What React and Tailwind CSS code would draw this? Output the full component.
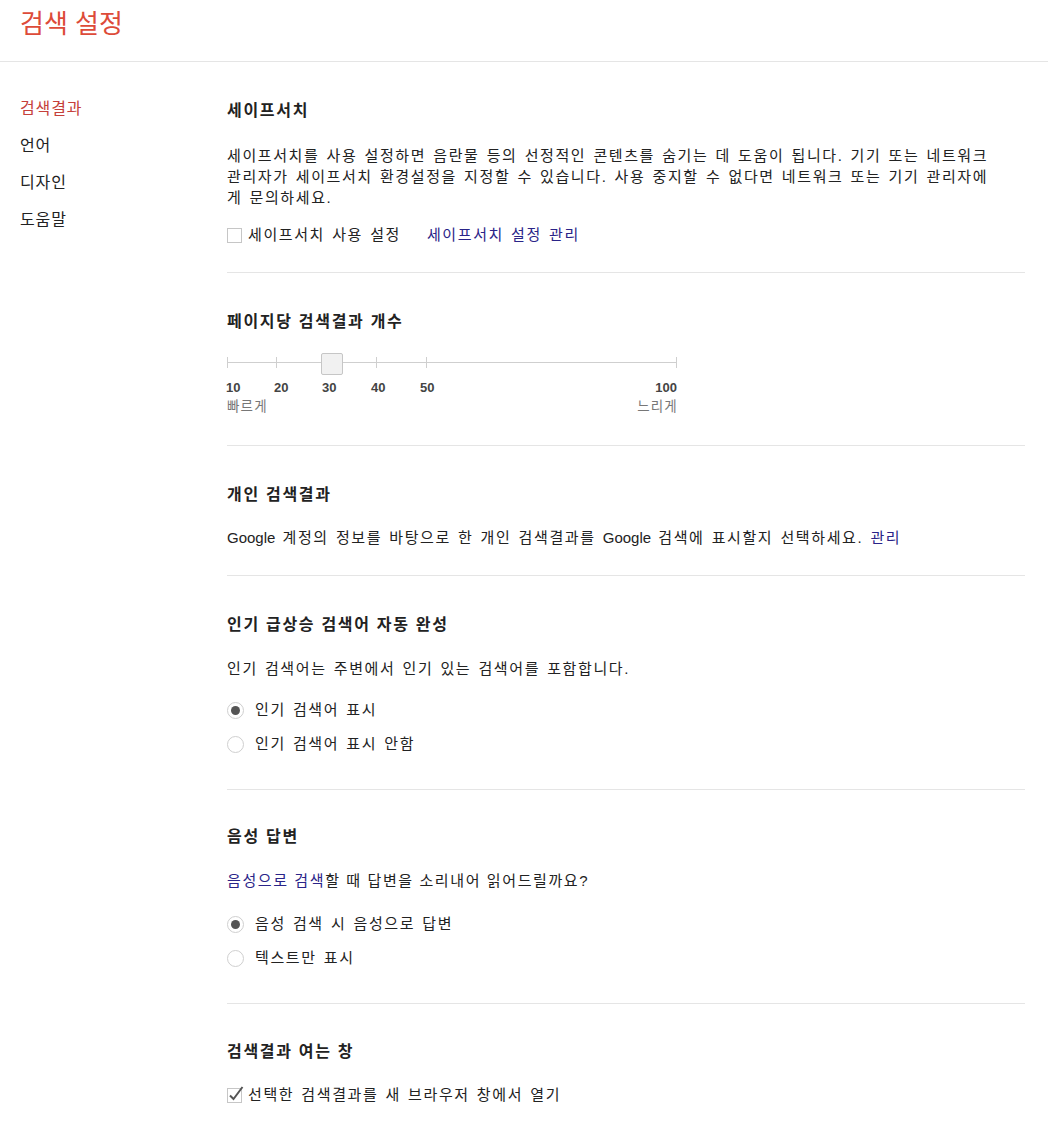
import React from "react";

function Radio({ checked, children }) {
  return (
    <div className="flex items-center h-[22px]">
      <span className="w-[17px] h-[17px] rounded-full border border-[#cfcfcf] bg-white flex items-center justify-center shrink-0">
        {checked && <span className="w-[9px] h-[9px] rounded-full bg-[#555]" />}
      </span>
      <span className="ml-[11px]">{children}</span>
    </div>
  );
}

function Title({ children }) {
  return (
    <h3 className="text-[16px] leading-[24px] font-bold tracking-[1.7px] [word-spacing:0px] text-[#222]">
      {children}
    </h3>
  );
}

function Latin({ children }) {
  return <span className="tracking-normal">{children}</span>;
}

export default function App() {
  const ticks = [0, 49, 99, 149, 199, 449];
  const labels = [
    { t: "10", l: -1 },
    { t: "20", l: 47 },
    { t: "30", l: 95 },
    { t: "40", l: 144 },
    { t: "50", l: 193 },
  ];
  return (
    <div className="min-h-screen bg-white text-[#222] font-['Liberation_Sans','Noto_Sans_CJK_KR',sans-serif] text-[15px]">
      <div className="h-[62px] border-b border-[#e5e5e5]">
        <div className="pl-[20px] pt-[8px] text-[26px] leading-[32px] text-[#dd4b39]">
          검색 설정
        </div>
      </div>
      <div className="flex">
        <nav className="w-[227px] shrink-0 pl-[20px] pt-[28px] text-[16px] tracking-[0.9px] leading-[37px]">
          <div className="text-[#c5403a]">검색결과</div>
          <div>언어</div>
          <div>디자인</div>
          <div>도움말</div>
        </nav>
        <main className="flex-1 pr-[23px] tracking-[1.6px] [word-spacing:1.4px]">
          {/* SafeSearch */}
          <section className="pt-[37px] pb-[26px] border-b border-[#e5e5e5]">
            <Title>세이프서치</Title>
            <p className="mt-[22px] leading-[21px] whitespace-nowrap">
              세이프서치를 사용 설정하면 음란물 등의 선정적인 콘텐츠를 숨기는 데 도움이 됩니다. 기기 또는 네트워크
              <br />
              관리자가 세이프서치 환경설정을 지정할 수 있습니다. 사용 중지할 수 없다면 네트워크 또는 기기 관리자에
              <br />
              게 문의하세요.
            </p>
            <div className="mt-[16px] flex items-center h-[22px]">
              <span className="w-[15px] h-[15px] border border-[#c6c6c6] bg-white shrink-0" />
              <span className="ml-[6px]">세이프서치 사용 설정</span>
              <a className="ml-[26px] text-[#2a2488]">세이프서치 설정 관리</a>
            </div>
          </section>

          {/* Results per page */}
          <section className="pt-[37px] pb-[29px] border-b border-[#e5e5e5]">
            <Title>페이지당 검색결과 개수</Title>
            <div className="relative mt-[16px] h-[28px] w-[450px]">
              <div className="absolute left-0 right-0 top-[12px] h-px bg-[#cfcfcf]" />
              {ticks.map((x) => (
                <div
                  key={x}
                  className="absolute top-[7px] h-[11px] w-px bg-[#cfcfcf]"
                  style={{ left: x }}
                />
              ))}
              <div className="absolute left-[94px] top-[3px] w-[22px] h-[22px] bg-[#f1f1f1] border border-[#c6c6c6] rounded-[2px]" />
            </div>
            <div className="relative mt-[2px] h-[16px] w-[450px] text-[13px] leading-[16px] font-bold text-[#444] tracking-normal [word-spacing:0px]">
              {labels.map((o) => (
                <span key={o.t} className="absolute top-0" style={{ left: o.l }}>
                  {o.t}
                </span>
              ))}
              <span className="absolute top-0 right-0">100</span>
            </div>
            <div className="mt-[2px] flex justify-between w-[450px] text-[13.5px] leading-[18px] text-[#777] tracking-[1.2px]">
              <span>빠르게</span>
              <span className="-mr-[1px]">느리게</span>
            </div>
          </section>

          {/* Private results */}
          <section className="pt-[37px] pb-[27px] border-b border-[#e5e5e5]">
            <Title>개인 검색결과</Title>
            <p className="mt-[20px] leading-[21px]">
              <Latin>Google</Latin> 계정의 정보를 바탕으로 한 개인 검색결과를 <Latin>Google</Latin> 검색에 표시할지 선택하세요.{" "}
              <a className="text-[#2a2488]">관리</a>
            </p>
          </section>

          {/* Trending */}
          <section className="pt-[37px] pb-[34px] border-b border-[#e5e5e5]">
            <Title>인기 급상승 검색어 자동 완성</Title>
            <p className="mt-[21px] leading-[21px]">
              인기 검색어는 주변에서 인기 있는 검색어를 포함합니다.
            </p>
            <div className="mt-[20px]">
              <Radio checked>인기 검색어 표시</Radio>
            </div>
            <div className="mt-[12px]">
              <Radio>인기 검색어 표시 안함</Radio>
            </div>
          </section>

          {/* Spoken answers */}
          <section className="pt-[35px] pb-[34px] border-b border-[#e5e5e5]">
            <Title>음성 답변</Title>
            <p className="mt-[21px] leading-[21px] [word-spacing:0px]">
              <a className="text-[#2a2488]">음성으로 검색</a>할 때 답변을 소리내어 읽어드릴까요<Latin>?</Latin>
            </p>
            <div className="mt-[22px]">
              <Radio checked>음성 검색 시 음성으로 답변</Radio>
            </div>
            <div className="mt-[12px]">
              <Radio>텍스트만 표시</Radio>
            </div>
          </section>

          {/* Where results open */}
          <section className="pt-[36px] pb-[24px]">
            <Title>검색결과 여는 창</Title>
            <div className="mt-[20px] flex items-center h-[22px]">
              <svg width="18" height="18" viewBox="0 0 18 18" className="shrink-0 -mt-[2px]">
                <rect x="0.5" y="3.5" width="14" height="14" fill="#fff" stroke="#c6c6c6" />
                <path d="M3 10.5 L6.5 14 L15.5 2" fill="none" stroke="#555" strokeWidth="2" />
              </svg>
              <span className="ml-[3px]">선택한 검색결과를 새 브라우저 창에서 열기</span>
            </div>
          </section>
        </main>
      </div>
    </div>
  );
}
